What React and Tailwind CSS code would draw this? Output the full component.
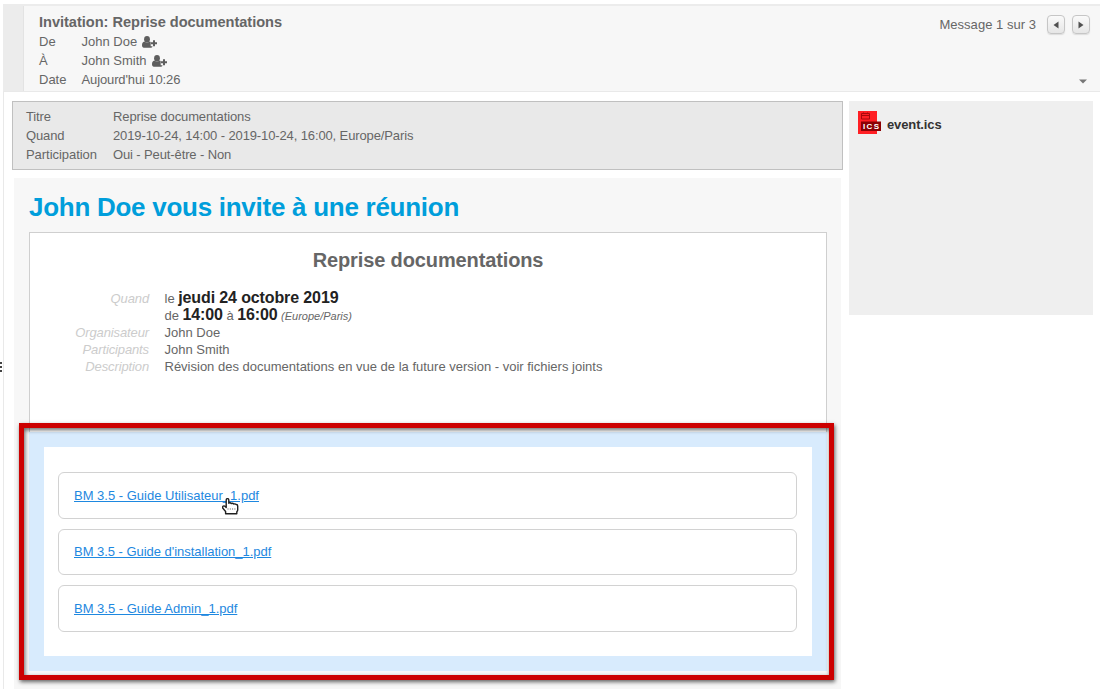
const files = [
  { name: "BM 3.5 - Guide Utilisateur_1.pdf", tracking: "tracking-normal" },
  { name: "BM 3.5 - Guide d'installation_1.pdf", tracking: "tracking-[-0.030px]" },
  { name: "BM 3.5 - Guide Admin_1.pdf", tracking: "tracking-normal" },
];

function UserPlus() {
  return (
    <svg viewBox="0 0 15 12" className="ml-[5px] h-[12px] w-[15px]" fill="#5e5e5e">
      <ellipse cx="5" cy="3.3" rx="2.9" ry="3.2" />
      <path d="M0 9.3C0 7.2.8 5.8 2.4 5.5c1.5 1.2 3.7 1.2 5.2 0 .5.1.8.3 1.1.5v4.200h1.700v.8c-.3.4-.8.7-1.400.7H1.800C.7 11.700 0 10.800 0 9.300Z" />
      <path d="M11 4.200h2v2h2v2h-2v2h-2v-2h-2v-2h2Z" />
    </svg>
  );
}

function Row({ label, children }) {
  return (
    <div className="flex h-[19px] items-center">
      <span className="w-[42.500px]">{label}</span>
      <span>{children}</span>
    </div>
  );
}

function InfoRow({ label, children }) {
  return (
    <div className="flex h-[18.800px] items-center">
      <span className="w-[87px]">{label}</span>
      <span>{children}</span>
    </div>
  );
}

function NavButton({ d }) {
  return (
    <button className="flex h-[19px] w-[18px] items-center justify-center rounded-[4px] border border-[#c6c6c6] bg-linear-to-b from-[#fafafa] to-[#e6e6e6] shadow-[0_1px_1px_#dddddd]">
      <svg viewBox="0 0 6 8" className="h-[8px] w-[6px]" fill="#505050">
        <path d={d} />
      </svg>
    </button>
  );
}

function Detail({ label, children }) {
  return (
    <div className="flex h-[17px] items-center">
      <span className="mr-[15.500px] w-[119px] text-right tracking-[-0.120px] text-[#cccccc] italic">{label}</span>
      <span>{children}</span>
    </div>
  );
}

function Header() {
  return (
    <header className="mt-1 flex h-[88px] border-t-2 border-b border-t-[#ececec] border-b-[#e9e9e9] bg-[#f7f7f7]">
      <div className="w-[21px] shrink-0 border-r border-[#e3e3e3] bg-[#ececec]" />
      <div className="flex flex-1 justify-between pr-[10px] pl-[15px]">
        <div className="pt-[5px]">
          <h1 className="h-[21px] text-[14.600px] leading-[22px] font-bold tracking-[-0.030px]">Invitation: Reprise documentations</h1>
          <Row label="De"><span className="flex items-center">John Doe<UserPlus /></span></Row>
          <Row label="À"><span className="flex items-center">John Smith<UserPlus /></span></Row>
          <Row label="Date"><span className="tracking-[-0.120px]">Aujourd'hui 10:26</span></Row>
        </div>
        <div className="flex flex-col items-end justify-between pt-[9px] pb-[7px]">
          <div className="flex items-center">
            <span className="mr-[11px] tracking-[0.030px]">Message 1 sur 3</span>
            <NavButton d="M5.500 0.500v7L0.500 4Z" />
            <span className="w-[7px]" />
            <NavButton d="M0.500 0.500v7L5.500 4Z" />
          </div>
          <svg viewBox="0 0 8 5" className="mr-[3px] h-[5px] w-[8px]" fill="#777777"><path d="M0 0.500h8L4 4.500Z" /></svg>
        </div>
      </div>
    </header>
  );
}

function IcsIcon() {
  return (
    <svg viewBox="0 0 23 23" className="h-[23px] w-[23px]">
      <rect x="0" y="0" width="19" height="23" fill="#ff1f24" />
      <path d="M3.500 2.500h8v5.500h-8ZM3.500 4.500h8M5.500 1.500v1M9.500 1.500v1" fill="none" stroke="#a8080c" />
      <rect x="3" y="10.500" width="20" height="9.500" fill="#8b0004" />
      <text x="5" y="18" textLength="16" fontSize="8" fontWeight="bold" fontFamily="Liberation Sans, sans-serif" fill="#ffffff">ICS</text>
    </svg>
  );
}

function Pointer() {
  return (
    <svg viewBox="0 0 17 17" className="absolute top-[498px] left-[222px] h-[17px] w-[17px]">
      <path d="M4.200 9V2Q4.200.6 5.500.6T6.800 2V5.200Q8.200 4.300 9.300 5.500 10.800 4.900 11.800 6 13.300 5.500 14.300 6.500 15.700 6.500 15.700 8V12Q15.700 13 14.800 13.700V15.700H3.600V13.500L.9 10.300Q0 9 1.200 8.100 2.300 7.500 3.200 8.500L4.200 9.500Z" fill="white" stroke="#202020" strokeWidth="1.400" strokeLinejoin="round" />
      <path d="M6 10v2M8.300 10v2M10.600 10v2M12.900 10v2" stroke="#aaaaaa" />
    </svg>
  );
}

export default function App() {
  return (
    <div className="relative flex h-[689px] w-[1100px] overflow-hidden bg-white font-['Liberation_Sans',sans-serif] text-[13px] whitespace-nowrap text-[#666666]">
      <div className="flex w-[3px] shrink-0 flex-col gap-[2px] pt-[362px]">
        <i className="h-[2px] w-[2px] bg-[#444444]" />
        <i className="h-[2px] w-[2px] bg-[#444444]" />
        <i className="h-[2px] w-[2px] bg-[#444444]" />
      </div>
      <div className="flex min-w-0 flex-1 flex-col">
        <Header />
        <div className="flex min-h-0 flex-1 border-l border-[#e9e9e9] pt-[9px] pl-[8px]">
          <main className="flex w-[831px] shrink-0 flex-col">
            <section className="h-[69px] shrink-0 border border-[#c0c0c0] bg-[#e9e9e9] pt-[5.500px] pl-[13px] tracking-[-0.120px]">
              <InfoRow label="Titre">Reprise documentations</InfoRow>
              <InfoRow label="Quand">2019-10-24, 14:00 - 2019-10-24, 16:00, Europe/Paris</InfoRow>
              <InfoRow label={<span className="tracking-[-0.050px]">Participation</span>}>Oui - Peut-être - Non</InfoRow>
            </section>
            <section className="mx-[2px] mt-[8px] flex-1 bg-[#f7f7f7] pt-[14px] pr-[14px] pl-[15px]">
              <h2 className="h-[40px] text-[26px] leading-[31px] font-bold tracking-[-0.270px] text-[#009edb]">John Doe vous invite à une réunion</h2>
              <div className="h-[200px] border border-b-0 border-[#cfcfcf] bg-white">
                <h3 className="mt-[15px] mb-[18px] h-[24px] text-center text-[20px] leading-[24px] font-bold tracking-[-0.120px]">Reprise documentations</h3>
                <Detail label="Quand">le <b className="text-[16px] leading-[17px] tracking-[-0.120px] text-[#222222]">jeudi 24 octobre 2019</b></Detail>
                <Detail label="">de <b className="text-[16px] leading-[17px] tracking-[-0.150px] text-[#222222]">14:00</b> à <b className="text-[16px] leading-[17px] tracking-[-0.150px] text-[#222222]">16:00</b> <i className="text-[11px]">(Europe/Paris)</i></Detail>
                <Detail label="Organisateur">John Doe</Detail>
                <Detail label="Participants">John Smith</Detail>
                <Detail label="Description">Révision des documentations en vue de la future version - voir fichiers joints</Detail>
              </div>
              <div className="h-[239px] bg-[#d8ebfd] p-[15px]">
                <div className="flex h-[209px] flex-col gap-[10px] bg-white pt-[25px] pr-[15px] pl-[14px]">
                  {files.map((file) => (
                    <div key={file.name} className="flex h-[46.500px] items-center rounded-[6px] border border-[#d2d2d2] pl-[15px]">
                      <a className={`text-[#1e88e0] underline ${file.tracking}`}>{file.name}</a>
                    </div>
                  ))}
                </div>
              </div>
            </section>
          </main>
          <aside className="ml-[6px] h-[214px] w-[244px] bg-[#efefef] pt-[9px] pl-[9px]">
            <div className="flex items-center">
              <IcsIcon />
              <span className="mt-[5px] ml-[6px] font-bold tracking-[-0.120px] text-[#333333]">event.ics</span>
            </div>
          </aside>
        </div>
      </div>
      <div className="absolute top-[423px] left-[19px] h-[257px] w-[815px] border-[5px] border-[#cc0000] shadow-[1px_2px_4px_rgba(0,0,0,0.6),inset_1px_2px_4px_rgba(0,0,0,0.6)]" />
      <Pointer />
    </div>
  );
}
